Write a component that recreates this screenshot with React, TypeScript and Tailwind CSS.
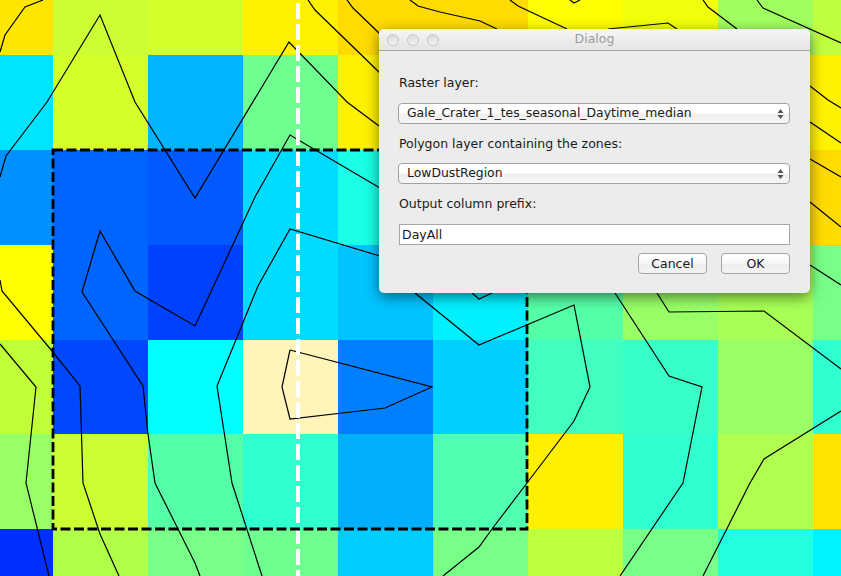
import React from "react";

const font = "font-['DejaVu_Sans',sans-serif]";

// raster cells, row by row
const cells = [
  "bg-[#ffe600]", "bg-[#ccff33]", "bg-[#d4ff2a]", "bg-[#fff200]", "bg-[#ffdb00]", "bg-[#ffdb00]", "bg-[#ffff00]", "bg-[#f0ff0a]", "bg-[#a0ff60]", "bg-[#c0ff40]",
  "bg-[#00e5ff]", "bg-[#d4ff2a]", "bg-[#00b4ff]", "bg-[#6eff90]", "bg-[#fff200]", "bg-[#fff200]", "bg-[#fff200]", "bg-[#fff200]", "bg-[#fff200]", "bg-[#fff200]",
  "bg-[#0090ff]", "bg-[#0064ff]", "bg-[#005aff]", "bg-[#00dcff]", "bg-[#1affe6]", "bg-[#1affe6]", "bg-[#ffdb00]", "bg-[#ffdb00]", "bg-[#ffdb00]", "bg-[#ffdb00]",
  "bg-[#ffff00]", "bg-[#0064ff]", "bg-[#0040ff]", "bg-[#00dcff]", "bg-[#00c4ff]", "bg-[#00f0ff]", "bg-[#55ffa8]", "bg-[#98ff66]", "bg-[#a8ff55]", "bg-[#78ff88]",
  "bg-[#c0ff38]", "bg-[#0048ff]", "bg-[#00ffff]", "bg-[#fff5bb]", "bg-[#0080ff]", "bg-[#00d0ff]", "bg-[#40ffc0]", "bg-[#38ffc8]", "bg-[#98ff66]", "bg-[#30ffd0]",
  "bg-[#98ff66]", "bg-[#ccff33]", "bg-[#55ffa8]", "bg-[#30ffd0]", "bg-[#00b0ff]", "bg-[#50ffb0]", "bg-[#fff000]", "bg-[#30ffd0]", "bg-[#b0ff50]", "bg-[#ffe400]",
  "bg-[#0030ff]", "bg-[#b0ff48]", "bg-[#78ff88]", "bg-[#6eff90]", "bg-[#00ccff]", "bg-[#78ff88]", "bg-[#bcff40]", "bg-[#78ff88]", "bg-[#20ffe0]", "bg-[#00f4ff]",
];

// zone contours in page pixels
const contours = [
  "0,52 5,35 25,7 43,0",
  "0,177 6,156 47,102 100,15 135,102 195,198 289,42 347,102 379,126",
  "308,0 315,10 380,73",
  "347,0 353,8 380,34",
  "410,0 418,6 440,12 480,21 497,29",
  "510,0 518,6 567,29",
  "570,0 574,3 580,0",
  "608,29 668,23 677,29",
  "703,0 708,7 737,29",
  "757,0 763,8 841,43",
  "810,86 828,100 841,108",
  "810,122 841,143",
  "810,159 841,177",
  "810,202 841,227",
  "810,265 841,285",
  "0,280 2,291 52,351 80,386 83,483 100,534 119,576",
  "200,576 195,563 155,483 148,434 143,386 82,292 100,231 135,291 195,326 255,197 290,135 380,188",
  "262,576 232,483 217,386 258,286 290,229 380,256",
  "0,344 36,387 26,483 49,576",
  "290,350 282,387 290,419 385,408 432,387 290,350",
  "415,293 479,345 574,305 590,387 574,421 527,483 492,529 479,547 443,576",
  "472,293 479,299 492,293",
  "615,293 669,376 702,387 683,483 620,576",
  "657,293 669,312 764,311 841,369",
  "841,411 764,459 750,483 703,576",
];

function Overlay() {
  return (
    <svg className="absolute inset-0" width="841" height="576" viewBox="0 0 841 576" fill="none">
      {contours.map((pts) => (
        <polyline key={pts} points={pts} stroke="#000" strokeWidth="1.2" />
      ))}
      <line x1="298" y1="0" x2="298" y2="576" stroke="#fff" strokeWidth="4" strokeDasharray="16 5" strokeDashoffset="18" />
      <rect x="53" y="150" width="474" height="379" stroke="#000" strokeWidth="2.8" strokeDasharray="10 3.5" />
    </svg>
  );
}

function SelectBox({ value }: { value: string }) {
  return (
    <div className="flex h-[21px] items-center justify-between rounded-[4px] border border-[#a3a3a3] bg-[linear-gradient(#ffffff,#ffffff_45%,#efefef_55%,#f6f6f6)] pl-2 pr-[5px] text-[12.4px] text-[#1a1a1a]">
      <span>{value}</span>
      <svg width="7" height="12" viewBox="0 0 7 12">
        <path d="M3.5 1 L6.5 5 H0.5 Z M0.5 7 H6.5 L3.5 11 Z" fill="#555" />
      </svg>
    </div>
  );
}

function PushButton({ label }: { label: string }) {
  return (
    <div className="flex h-[21px] w-[69px] items-center justify-center rounded-[4px] border border-[#a3a3a3] bg-[linear-gradient(#ffffff,#f8f8f8_45%,#eeeeee_55%,#f4f4f4)] pt-px text-[12.5px] text-[#1a1a1a]">
      {label}
    </div>
  );
}

function Light() {
  return <div className="size-3 rounded-full border border-[#c4c4c4] bg-[linear-gradient(#dcdcdc,#f2f2f2)]" />;
}

function Dialog() {
  return (
    <div className={`absolute left-[379px] top-[29px] flex h-[264px] w-[431px] flex-col overflow-hidden rounded-[5px] bg-[#ececec] shadow-[0_4px_14px_rgba(0,0,0,0.5)] ${font}`}>
      <div className="relative flex h-[22px] items-center gap-2 border-b border-[#a6a6a6] bg-[linear-gradient(#f6f6f6,#e4e4e4)] pl-2">
        <Light />
        <Light />
        <Light />
        <div className="absolute inset-0 flex items-center justify-center text-[12.5px] text-[#9a9a9a]">Dialog</div>
      </div>
      <div className="flex flex-col pl-[19px] pr-5 text-[12.5px] text-[#1a1a1a]">
        <div className="mt-[23px] h-[18px] leading-[18px] pl-px">Raster layer:</div>
        <div className="mt-[11px]">
          <SelectBox value="Gale_Crater_1_tes_seasonal_Daytime_median" />
        </div>
        <div className="mt-[11px] h-[18px] leading-[18px] pl-px">Polygon layer containing the zones:</div>
        <div className="mt-[10px]">
          <SelectBox value="LowDustRegion" />
        </div>
        <div className="mt-[11px] h-[18px] leading-[18px] pl-px">Output column prefix:</div>
        <div className="mt-[11px] ml-px flex h-[21px] items-center border border-[#a6a6a6] bg-white pl-[2px] pt-px">DayAll</div>
        <div className="mt-2 flex justify-end gap-[14px]">
          <PushButton label="Cancel" />
          <PushButton label="OK" />
        </div>
      </div>
    </div>
  );
}

export default function App() {
  return (
    <div className="relative h-[576px] w-[841px] overflow-hidden">
      <div className="grid h-full w-full grid-cols-[53px_repeat(8,95px)_28px] grid-rows-[55px_95px_95px_95px_94px_95px_47px]">
        {cells.map((c, i) => (
          <div key={i} className={c} />
        ))}
      </div>
      <Overlay />
      <Dialog />
    </div>
  );
}
